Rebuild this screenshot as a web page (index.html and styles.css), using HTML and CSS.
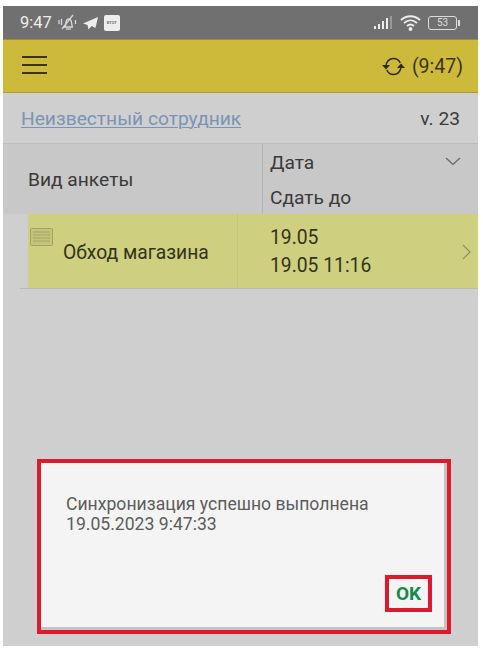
FILE: index.html
```html
<!DOCTYPE html>
<html lang="en">
<head>
  <meta charset="UTF-8">
  <meta name="viewport" content="width=device-width, initial-scale=1.0">
  <title>Синхронизация</title>
  <link rel="stylesheet" href="styles.css">
</head>
<body>
  <div class="phone">
    <!--STATUS BAR-->
    <div class="status-bar">
      <span class="status-time">9:47</span>
      <svg class="status-icon" width="19" height="17" viewBox="0 0 19 17" fill="none" stroke="#d8d8d8" stroke-width="1.300">
        <path d="M5 13h10M7 13c1-2 .5-4 1.500-6.500 1-2 3.500-2 4.500 0 .7 1.500.5 4.500 1.500 6.500"/>
        <path d="M8 15h5"/>
        <path d="M4 15L15 1"/>
        <path d="M1 6v4M3.500 5v6M17.500 6v4"/>
      </svg>
      <svg class="status-icon" width="15" height="14" viewBox="0 0 15 14">
        <path d="M15 1L0 7.500l4.500 1.500 1 4.500 3-3.500 4 2z" fill="#eeeeee"/>
      </svg>
      <span class="status-app">BTOT</span>
      <span class="status-right">
        <svg width="20" height="14" viewBox="0 0 20 14">
          <rect x="1" y="10" width="2" height="3" fill="#eee"/>
          <rect x="5" y="8" width="2" height="5" fill="#eee"/>
          <rect x="9" y="5" width="2" height="8" fill="#eee"/>
          <rect x="13" y="2" width="2" height="11" fill="#eee"/>
          <rect x="17" y="0" width="2" height="13" fill="#999"/>
        </svg>
        <svg width="21" height="17" viewBox="0 0 21 17" fill="none" stroke="#eee" stroke-width="1.800">
          <path d="M1 6C6.500 1 14.500 1 20 6"/>
          <path d="M4 9c4-3.500 9-3.500 13 0"/>
          <path d="M7 12c2.300-2 4.700-2 7 0"/>
          <circle cx="10.500" cy="15" r="1" fill="#eee"/>
        </svg>
        <span class="battery">53</span>
      </span>
    </div>

    <!--TOP BAR-->
    <div class="top-bar">
      <div class="menu-icon"><i></i><i></i><i></i></div>
      <div class="sync">
        <svg width="23" height="21" viewBox="0 0 23 21" fill="none" stroke="#2f2a10" stroke-width="1.500">
          <path d="M4 10.500C4 5.500 7.500 2.500 11.500 2.500c3 0 5.500 1.600 6.700 4.500"/>
          <path d="M19 10.500c0 5-3.500 8-7.500 8-3 0-5.500-1.600-6.700-4.500"/>
          <path d="M0 9h8l-4 4.500zM15 12h8l-4-4.500z" fill="#2f2a10" stroke="none"/>
        </svg>
        <span>(9:47)</span>
      </div>
    </div>

    <!--USER-->
    <div class="user-row">
      <a class="user-link">Неизвестный сотрудник</a>
      <span class="version">v. 23</span>
    </div>

    <!--TABLE-->
    <div class="table-head">
      <div class="col-type">Вид анкеты</div>
      <div class="col-date">
        <div class="date-line">
          <span>Дата</span>
          <svg width="16" height="9" viewBox="0 0 16 9" fill="none" stroke="#666" stroke-width="1.200"><path d="M1 1l7 6.500L15 1"/></svg>
        </div>
        <div>Сдать до</div>
      </div>
    </div>
    <div class="table-row">
      <div class="row-indent"></div>
      <div class="row-main">
        <svg class="row-icon" width="24" height="20" viewBox="0 0 24 20" fill="#c5c47a" stroke="#a3a268">
          <rect x=".5" y=".5" width="22" height="17" rx="1"/>
          <path d="M3 4h17M3 7h17M3 10h17M3 13h17" stroke-width="1"/>
        </svg>
        <span class="row-title">Обход магазина</span>
      </div>
      <div class="row-dates">
        <div>19.05</div>
        <div>19.05 11:16</div>
      </div>
      <svg class="row-arrow" width="9" height="16" viewBox="0 0 9 16" fill="none" stroke="#8f8f70" stroke-width="1.200"><path d="M1 1l7 7-7 7"/></svg>
    </div>

    <!--DIALOG-->
    <div class="dialog">
      <div class="dialog-text">
        Синхронизация успешно выполнена<br>
        19.05.2023 9:47:33
      </div>
      <div class="dialog-actions">
        <button class="ok-button">OK</button>
      </div>
    </div>
  </div>
</body>
</html>
```

FILE: styles.css
```css
body {
  margin: 0;
  background-color: #ffffff;
  font-family: Roboto, "Noto Sans", sans-serif;
  color: #3a3a3a;
}
.phone {
  position: relative;
  display: flex;
  flex-direction: column;
  width: 475px;
  height: 640px;
  margin: 6px 0 0 3px;
  background-color: #cfcfcf;
  overflow: hidden;
}
.status-bar {
  display: flex;
  align-items: center;
  gap: 6px;
  height: 33px;
  padding: 0 21px 0 17px;
  flex-shrink: 0;
  background-color: #707070;
  color: #eeeeee;
  font-size: 16.500px;
}
.status-app {
  width: 16px;
  height: 16px;
  border-radius: 2px;
  background-color: #eeeeee;
  color: #777777;
  font-size: 4px;
  font-weight: bold;
  line-height: 16px;
  text-align: center;
}
.status-right {
  display: flex;
  align-items: center;
  gap: 7px;
  margin-left: auto;
}
.battery {
  position: relative;
  width: 27px;
  height: 12px;
  border: 1px solid #dddddd;
  border-radius: 3px;
  color: #dddddd;
  font-size: 10px;
  line-height: 12px;
  text-align: center;
}
.battery::after {
  content: "";
  position: absolute;
  right: -4px;
  top: 3px;
  width: 2px;
  height: 6px;
  background-color: #dddddd;
}
.top-bar {
  display: flex;
  align-items: center;
  justify-content: space-between;
  height: 54px;
  padding: 0 15px 0 19px;
  flex-shrink: 0;
  border-top: 1px solid #9a8f3c;
  border-bottom: 1px solid #a89a42;
  background-color: #cdb93a;
  box-sizing: border-box;
}
.menu-icon {
  display: flex;
  flex-direction: column;
  gap: 6px;
  width: 25px;
  margin-top: -2px;
}
.menu-icon i {
  display: block;
  height: 2px;
  background-color: #3a3518;
}
.sync {
  display: flex;
  align-items: center;
  gap: 7px;
  color: #3a3518;
  font-size: 19.500px;
}
.user-row {
  display: flex;
  align-items: center;
  justify-content: space-between;
  height: 51px;
  padding: 0 18px;
  flex-shrink: 0;
  border-bottom: 1px solid #bdbdbd;
  box-sizing: border-box;
  font-size: 19.200px;
}
.user-link {
  color: #7b93b5;
  text-decoration: underline;
  text-underline-offset: 2px;
  text-decoration-thickness: 1px;
}
.table-head {
  display: flex;
  height: 70px;
  flex-shrink: 0;
  background-color: #c8c8c8;
  font-size: 19.200px;
}
.col-type {
  display: flex;
  align-items: center;
  width: 260px;
  padding-left: 25px;
  box-sizing: border-box;
  border-right: 1px solid #b4b4b4;
}
.col-date {
  display: flex;
  flex-direction: column;
  justify-content: space-between;
  flex-grow: 1;
  padding: 7px 17px 5px 7px;
}
.date-line {
  display: flex;
  align-items: flex-start;
  justify-content: space-between;
}
.date-line svg {
  margin-top: 6px;
}
.table-row {
  position: relative;
  display: flex;
  height: 75px;
  flex-shrink: 0;
  border-bottom: 1px solid #bbbbb0;
  box-sizing: border-box;
  margin-left: 17px;
  color: #33331a;
  font-size: 19.300px;
}
.row-indent {
  width: 8px;
  background-color: #cfcfcf;
}
.row-main {
  display: flex;
  align-items: center;
  gap: 10px;
  width: 210px;
  padding: 0 0 0 2px;
  box-sizing: border-box;
  background-color: #cfd07f;
  border-right: 1px solid #c5c679;
}
.row-icon {
  align-self: flex-start;
  margin-top: 14px;
  margin-right: -1px;
}
.row-title {
  margin-top: 2px;
}
.row-dates {
  display: flex;
  flex-direction: column;
  justify-content: center;
  gap: 5px;
  flex-grow: 1;
  padding: 1px 0 0 32px;
  background-color: #cfd07f;
}
.row-arrow {
  position: absolute;
  right: 7px;
  top: 30px;
}
.dialog {
  position: absolute;
  left: 34px;
  top: 453px;
  display: flex;
  flex-direction: column;
  justify-content: space-between;
  width: 414px;
  height: 175px;
  box-sizing: border-box;
  border: 4px solid #db1a2e;
  padding: 31px 15px 18px 25px;
  background-color: #f4f4f4;
  box-shadow: inset -3px -3px 0 #c4c4c4;
}
.dialog-text {
  color: #5c5c5c;
  font-size: 17.600px;
  line-height: 20px;
}
.dialog-actions {
  display: flex;
  justify-content: flex-end;
}
.ok-button {
  width: 47px;
  height: 37px;
  padding: 0;
  border: 4px solid #db1a2e;
  background-color: #f4f4f4;
  color: #178a4c;
  font-family: Roboto, sans-serif;
  font-size: 19px;
  font-weight: bold;
}
```
